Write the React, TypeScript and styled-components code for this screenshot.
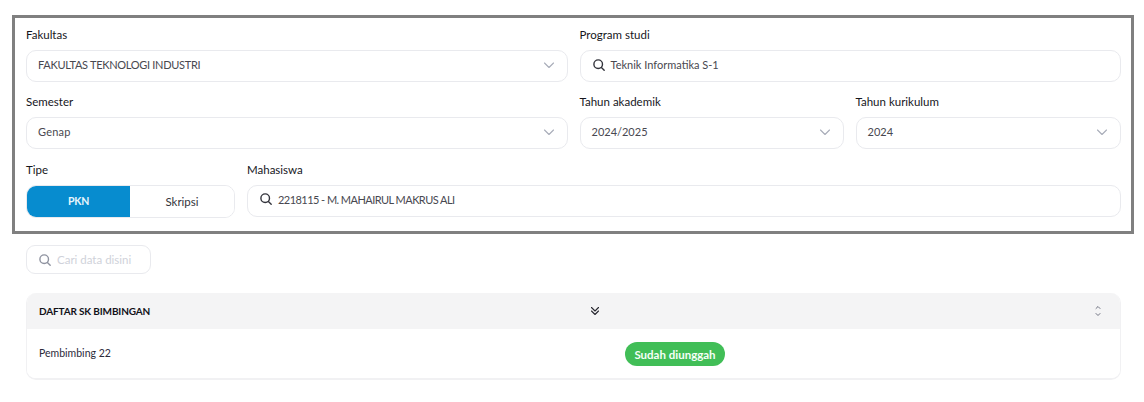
import React from "react";
import styled, { createGlobalStyle } from "styled-components";

const Global = createGlobalStyle`
  html, body { margin: 0; padding: 0; background: #fff; }
  body { font-family: "Lato", "Open Sans", sans-serif; color: #1a1a22; }
`;

const Page = styled.div`
  width: 1144px;
  height: 402px;
  overflow: hidden;
  padding: 15px 10px 0 12px;
  box-sizing: border-box;
`;

const Frame = styled.section`
  box-sizing: border-box;
  height: 219px;
  border: 3px solid #808080;
  padding: 10px 10px 0 11px;
  display: flex;
  flex-direction: column;
  gap: 13.4px;
`;

const Row = styled.div<{ $cols: string }>`
  display: grid;
  grid-template-columns: ${(p) => p.$cols};
  column-gap: 12px;
`;

const Field = styled.div`
  display: flex;
  flex-direction: column;
  gap: 8px;
  min-width: 0;
`;

const Label = styled.label`
  font-size: 11.5px;
  line-height: 14px;
  color: #16161c;
`;

const Box = styled.div`
  box-sizing: border-box;
  height: 32px;
  border: 1px solid #e9eaee;
  border-radius: 10px;
  background: #fff;
  display: flex;
  align-items: center;
  padding: 0 12px 3px 11px;
  font-size: 11px;
  color: #484850;
`;

const Value = styled.span<{ $spacing?: number }>`
  flex: 1;
  letter-spacing: ${(p) => p.$spacing ?? 0}px;
`;

const SearchIcon = styled.svg<{ $muted?: boolean }>`
  width: 14px;
  height: 14px;
  margin-right: 5px;
  flex: none;
  fill: none;
  stroke: ${(p) => (p.$muted ? "#8f93a0" : "#33343c")};
  stroke-width: 1.4;
  stroke-linecap: round;
`;

const Chevron = styled.svg`
  width: 12px;
  height: 12px;
  flex: none;
  fill: none;
  stroke: #a9adb9;
  stroke-width: 1.1;
  stroke-linecap: round;
  stroke-linejoin: round;
`;

const Toggle = styled.div`
  box-sizing: border-box;
  height: 33px;
  border: 1px solid #e9eaee;
  border-radius: 10px;
  display: grid;
  grid-template-columns: 103px 1fr;
  overflow: hidden;
`;

const ToggleItem = styled.div<{ $active?: boolean }>`
  display: flex;
  align-items: center;
  justify-content: center;
  font-size: ${(p) => (p.$active ? "10.5px" : "11.5px")};
  font-weight: ${(p) => (p.$active ? 700 : 400)};
  letter-spacing: ${(p) => (p.$active ? "-0.3px" : "0")};
  background: ${(p) => (p.$active ? "#078ccf" : "#fff")};
  color: ${(p) => (p.$active ? "#e8f5fc" : "#33343c")};
`;

const Filter = styled.div`
  box-sizing: border-box;
  margin: 11px 0 0 14px;
  width: 125px;
  height: 29px;
  border: 1px solid #e9eaee;
  border-radius: 9px;
  display: flex;
  align-items: center;
  padding-left: 11px;
  font-size: 11.5px;
  color: #cfd2da;
`;

const Table = styled.div`
  box-sizing: border-box;
  margin: 19px 0 0 14px;
  width: 1095px;
  height: 87px;
  border: 1px solid #f1f1f3;
  border-top: 0;
  border-bottom-width: 2px;
  border-radius: 10px;
  overflow: hidden;
`;

const TableRow = styled.div<{ $head?: boolean }>`
  display: grid;
  grid-template-columns: ${(p) => (p.$head ? "1fr 30px" : "586px 1fr")};
  align-items: center;
  height: ${(p) => (p.$head ? "36px" : "50px")};
  background: ${(p) => (p.$head ? "#f4f4f5" : "#fff")};
  padding-left: 13px;
  margin-left: -1px;
`;

const HeadCell = styled.div`
  font-size: 10px;
  font-weight: 700;
  letter-spacing: -0.15px;
  color: #111118;
  display: grid;
  grid-template-columns: 551px auto;
  align-items: center;
  justify-content: start;
`;

const Cell = styled.div`
  font-size: 10.5px;
  color: #2c2a3a;
  margin-top: -2px;
`;

const SortArrows = styled.svg`
  width: 8px;
  height: 12px;
  fill: none;
  stroke: #6f7280;
  stroke-width: 1;
  stroke-linecap: round;
  stroke-linejoin: round;
`;

const DoubleChevron = styled.svg`
  width: 10px;
  height: 10px;
  display: block;
  fill: none;
  stroke: #2a2a32;
  stroke-width: 1.1;
  stroke-linecap: round;
  stroke-linejoin: round;
`;

const HeadRight = styled.div`
  display: flex;
  padding-left: 4px;
`;

const PillCell = styled.div`
  display: flex;
`;

const Pill = styled.span`
  display: flex;
  align-items: center;
  justify-content: center;
  width: 100px;
  height: 24px;
  border-radius: 12px;
  background: #41be57;
  color: #f6fff7;
  font-size: 11.5px;
  font-weight: 700;
`;

const Search = ({ muted }: { muted?: boolean }) => (
  <SearchIcon viewBox="0 0 14 14" $muted={muted}>
    <circle cx="6.2" cy="6.2" r="4.3" />
    <path d="M9.4 9.4 12.2 12.2" />
  </SearchIcon>
);

const Down = () => (
  <Chevron viewBox="0 0 12 12">
    <path d="M1.5 4 6 8.5 10.5 4" />
  </Chevron>
);

const Select = ({ label, value, spacing }: { label: string; value: string; spacing?: number }) => (
  <Field>
    <Label>{label}</Label>
    <Box>
      <Value $spacing={spacing}>{value}</Value>
      <Down />
    </Box>
  </Field>
);

const SearchField = ({ label, value, spacing }: { label: string; value: string; spacing?: number }) => (
  <Field>
    <Label>{label}</Label>
    <Box>
      <Search />
      <Value $spacing={spacing}>{value}</Value>
    </Box>
  </Field>
);

export default function App() {
  return (
    <Page>
      <Global />
      <Frame>
        <Row $cols="541.5px 1fr">
          <Select label="Fakultas" value="FAKULTAS TEKNOLOGI INDUSTRI" spacing={-0.3} />
          <SearchField label="Program studi" value="Teknik Informatika S-1" />
        </Row>
        <Row $cols="541.5px 264px 1fr">
          <Select label="Semester" value="Genap" spacing={0.2} />
          <Select label="Tahun akademik" value="2024/2025" />
          <Select label="Tahun kurikulum" value="2024" />
        </Row>
        <Row $cols="209px 1fr">
          <Field>
            <Label>Tipe</Label>
            <Toggle>
              <ToggleItem $active>PKN</ToggleItem>
              <ToggleItem>Skripsi</ToggleItem>
            </Toggle>
          </Field>
          <SearchField label="Mahasiswa" value="2218115 - M. MAHAIRUL MAKRUS ALI" spacing={-0.55} />
        </Row>
      </Frame>
      <Filter>
        <Search muted />
        Cari data disini
      </Filter>
      <Table>
        <TableRow $head>
          <HeadCell>
            DAFTAR SK BIMBINGAN
            <DoubleChevron viewBox="0 0 10 10">
              <path d="M1.5 1.5 5 5 8.5 1.5M1.5 5 5 8.5 8.5 5" />
            </DoubleChevron>
          </HeadCell>
          <HeadRight>
            <SortArrows viewBox="0 0 8 12">
              <path d="M2 3.5 4 1.5 6 3.5M2 8.5 4 10.5 6 8.5" />
            </SortArrows>
          </HeadRight>
        </TableRow>
        <TableRow>
          <Cell>Pembimbing 22</Cell>
          <PillCell>
            <Pill>Sudah diunggah</Pill>
          </PillCell>
        </TableRow>
      </Table>
    </Page>
  );
}
